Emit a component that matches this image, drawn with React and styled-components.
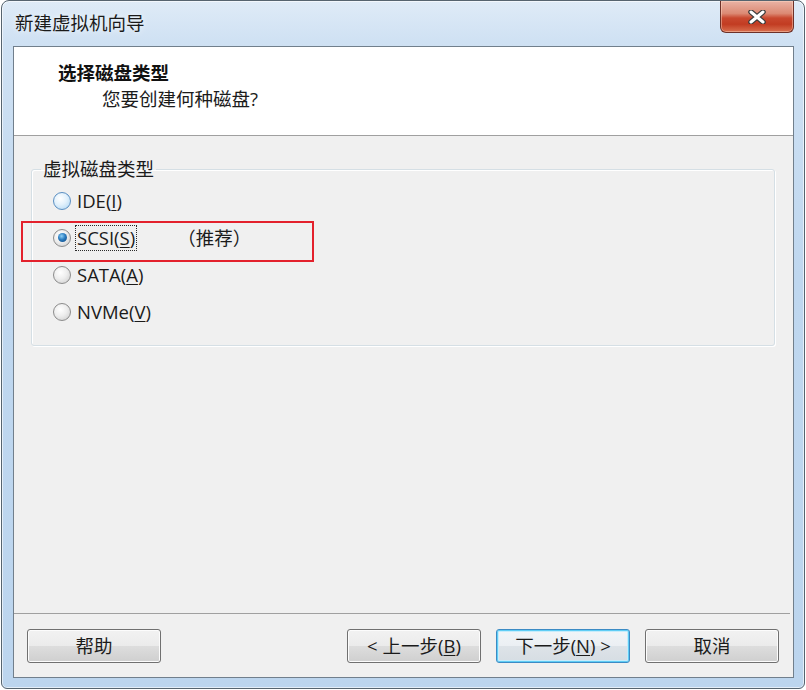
import React from "react";
import styled, { createGlobalStyle } from "styled-components";

const GlobalStyle = createGlobalStyle`
  html, body {
    margin: 0;
    padding: 0;
    background: #ffffff;
  }
  body {
    font-family: "Open Sans", "Noto Sans CJK SC", sans-serif;
    color: #1b1b1b;
  }
`;

const Window = styled.div`
  box-sizing: border-box;
  width: 804px;
  height: 689px;
  margin-left: 1px;
  border: 1px solid #56646f;
  border-radius: 8px 8px 6px 6px;
  background: linear-gradient(180deg, #dfebf7 0%, #cfe1f3 6%, #bfd7ef 40%, #bcd5ee 100%);
  display: flex;
  flex-direction: column;
  padding: 0 10px 10px 11px;
  box-shadow: inset 0 0 0 1px rgba(255, 255, 255, 0.6);
`;

const TitleBar = styled.div`
  height: 45px;
  display: flex;
  align-items: flex-start;
`;

const Title = styled.div`
  padding: 10px 0 0 2px;
  font-size: 18.5px;
  line-height: 24px;
  color: #1a1a1a;
  text-shadow: 0 0 6px rgba(255, 255, 255, 0.9);
`;

const CloseButton = styled.div`
  margin-left: auto;
  box-sizing: border-box;
  width: 74px;
  height: 32px;
  border: 1px solid #6d3128;
  border-top: none;
  border-radius: 0 0 6px 6px;
  background: linear-gradient(180deg, #eab3a5 0%, #dc8a74 40%, #c9482f 55%, #c23c22 75%, #d9704f 100%);
  box-shadow: inset 0 0 0 1px rgba(255, 220, 200, 0.45);
  display: flex;
  align-items: center;
  justify-content: center;
`;

const Client = styled.div`
  flex: 1;
  border: 1px solid #717f8c;
  background: #f0f0f0;
  display: flex;
  flex-direction: column;
`;

const Header = styled.div`
  height: 89px;
  background: #ffffff;
  border-bottom: 1px solid #a0a0a0;
  display: flex;
  flex-direction: column;
  padding-top: 13px;
  box-sizing: border-box;
`;

const HeaderTitle = styled.div`
  padding-left: 44px;
  font-size: 18.5px;
  line-height: 26px;
  font-weight: 700;
  color: #111;
`;

const HeaderSub = styled.div`
  padding-left: 88px;
  font-size: 18.5px;
  line-height: 26px;
  color: #1b1b1b;
`;

const Body = styled.div`
  flex: 1;
  padding: 21px 18px 0 17px;
`;

const Group = styled.fieldset`
  margin: 0;
  padding: 1px 20px 15px 9px;
  border: 1px solid #d5dfe5;
  border-radius: 3px;
  box-shadow: inset 1px 1px 0 #ffffff, 1px 1px 0 #ffffff;
`;

const Legend = styled.legend`
  padding: 0 2px;
  font-size: 18.5px;
  line-height: 24px;
  color: #1b1b1b;
`;

const RadioRow = styled.div`
  position: relative;
  height: 37px;
  padding-left: 12px;
  display: flex;
  align-items: center;
  font-size: 18.5px;
  line-height: 24px;
`;

const RadioCircle = styled.span`
  position: relative;
  box-sizing: border-box;
  width: 18px;
  height: 18px;
  border-radius: 50%;
  border: 1px solid ${(p) => (p.$hot ? "#5b8fc2" : "#8c8c8c")};
  background: ${(p) =>
    p.$hot
      ? "radial-gradient(circle at 40% 35%, #ffffff 0%, #e2f1fc 45%, #a9d3f2 100%)"
      : "radial-gradient(circle at 40% 35%, #ffffff 0%, #eeeeee 45%, #c9c9c9 100%)"};
  &::after {
    content: "";
    display: ${(p) => (p.$checked ? "block" : "none")};
    position: absolute;
    left: 3.5px;
    top: 3.5px;
    width: 9px;
    height: 9px;
    border-radius: 50%;
    background: radial-gradient(circle at 40% 35%, #8fd0f5 0%, #2a7cc0 45%, #0b3f78 100%);
  }
`;

const Label = styled.span`
  margin-left: 4px;
  padding: 0 1px;
  border: 1px dotted ${(p) => (p.$focus ? "#2b2b2b" : "transparent")};
`;

const Key = styled.span`
  text-decoration: underline;
  text-underline-offset: 2px;
`;

const Note = styled.span`
  margin-left: 40px;
`;

const Highlight = styled.div`
  position: absolute;
  left: -20px;
  top: 2px;
  width: 293px;
  height: 41px;
  box-sizing: border-box;
  border: 2px solid #e3212c;
  pointer-events: none;
`;

const Footer = styled.div`
  border-top: 1px solid #a0a0a0;
  margin-right: 3px;
  display: flex;
  padding: 15px 11px 14px 13px;
`;

const Button = styled.div`
  box-sizing: border-box;
  width: 134px;
  height: 34px;
  margin-left: ${(p) => (p.$push ? "auto" : p.$gap ? "15px" : "0")};
  border: 1px solid ${(p) => (p.$default ? "#3c8bc4" : "#707070")};
  border-radius: 3px;
  background: ${(p) =>
    p.$default
      ? "linear-gradient(180deg, #f1f5f8 0%, #ebeff3 50%, #dde3e8 51%, #d6dde3 100%)"
      : "linear-gradient(180deg, #f2f2f2 0%, #ebebeb 50%, #dddddd 51%, #cfcfcf 100%)"};
  box-shadow: ${(p) =>
    p.$default
      ? "inset 0 0 0 1px #5fcdf5, inset 0 0 0 2px #c6ecfb"
      : "inset 0 0 0 1px #fcfcfc"};
  display: flex;
  align-items: center;
  justify-content: center;
  font-size: 18.5px;
  line-height: 24px;
  color: #1b1b1b;
`;

const options = [
  { name: "IDE", key: "I", hot: true },
  { name: "SCSI", key: "S", checked: true, focus: true, note: "（推荐）" },
  { name: "SATA", key: "A" },
  { name: "NVMe", key: "V" },
];

function CloseGlyph() {
  return (
    <svg width="20" height="14" viewBox="0 0 20 14">
      <path d="M4 2 L16 12 M16 2 L4 12" stroke="#3b3b3b" strokeWidth="5.5" strokeLinecap="round" />
      <path d="M4 2 L16 12 M16 2 L4 12" stroke="#ffffff" strokeWidth="3" strokeLinecap="round" />
    </svg>
  );
}

export default function App() {
  return (
    <>
      <GlobalStyle />
      <Window>
        <TitleBar>
          <Title>新建虚拟机向导</Title>
          <CloseButton>
            <CloseGlyph />
          </CloseButton>
        </TitleBar>
        <Client>
          <Header>
            <HeaderTitle>选择磁盘类型</HeaderTitle>
            <HeaderSub>您要创建何种磁盘?</HeaderSub>
          </Header>
          <Body>
            <Group>
              <Legend>虚拟磁盘类型</Legend>
              {options.map((o) => (
                <RadioRow key={o.name}>
                  <RadioCircle $hot={o.hot} $checked={o.checked} />
                  <Label $focus={o.focus}>
                    {o.name}(<Key>{o.key}</Key>)
                  </Label>
                  {o.note && <Note>{o.note}</Note>}
                  {o.checked && <Highlight />}
                </RadioRow>
              ))}
            </Group>
          </Body>
          <Footer>
            <Button>帮助</Button>
            <Button $push>
              &lt; 上一步(<Key>B</Key>)
            </Button>
            <Button $gap $default>
              下一步(<Key>N</Key>) &gt;
            </Button>
            <Button $gap>取消</Button>
          </Footer>
        </Client>
      </Window>
    </>
  );
}
